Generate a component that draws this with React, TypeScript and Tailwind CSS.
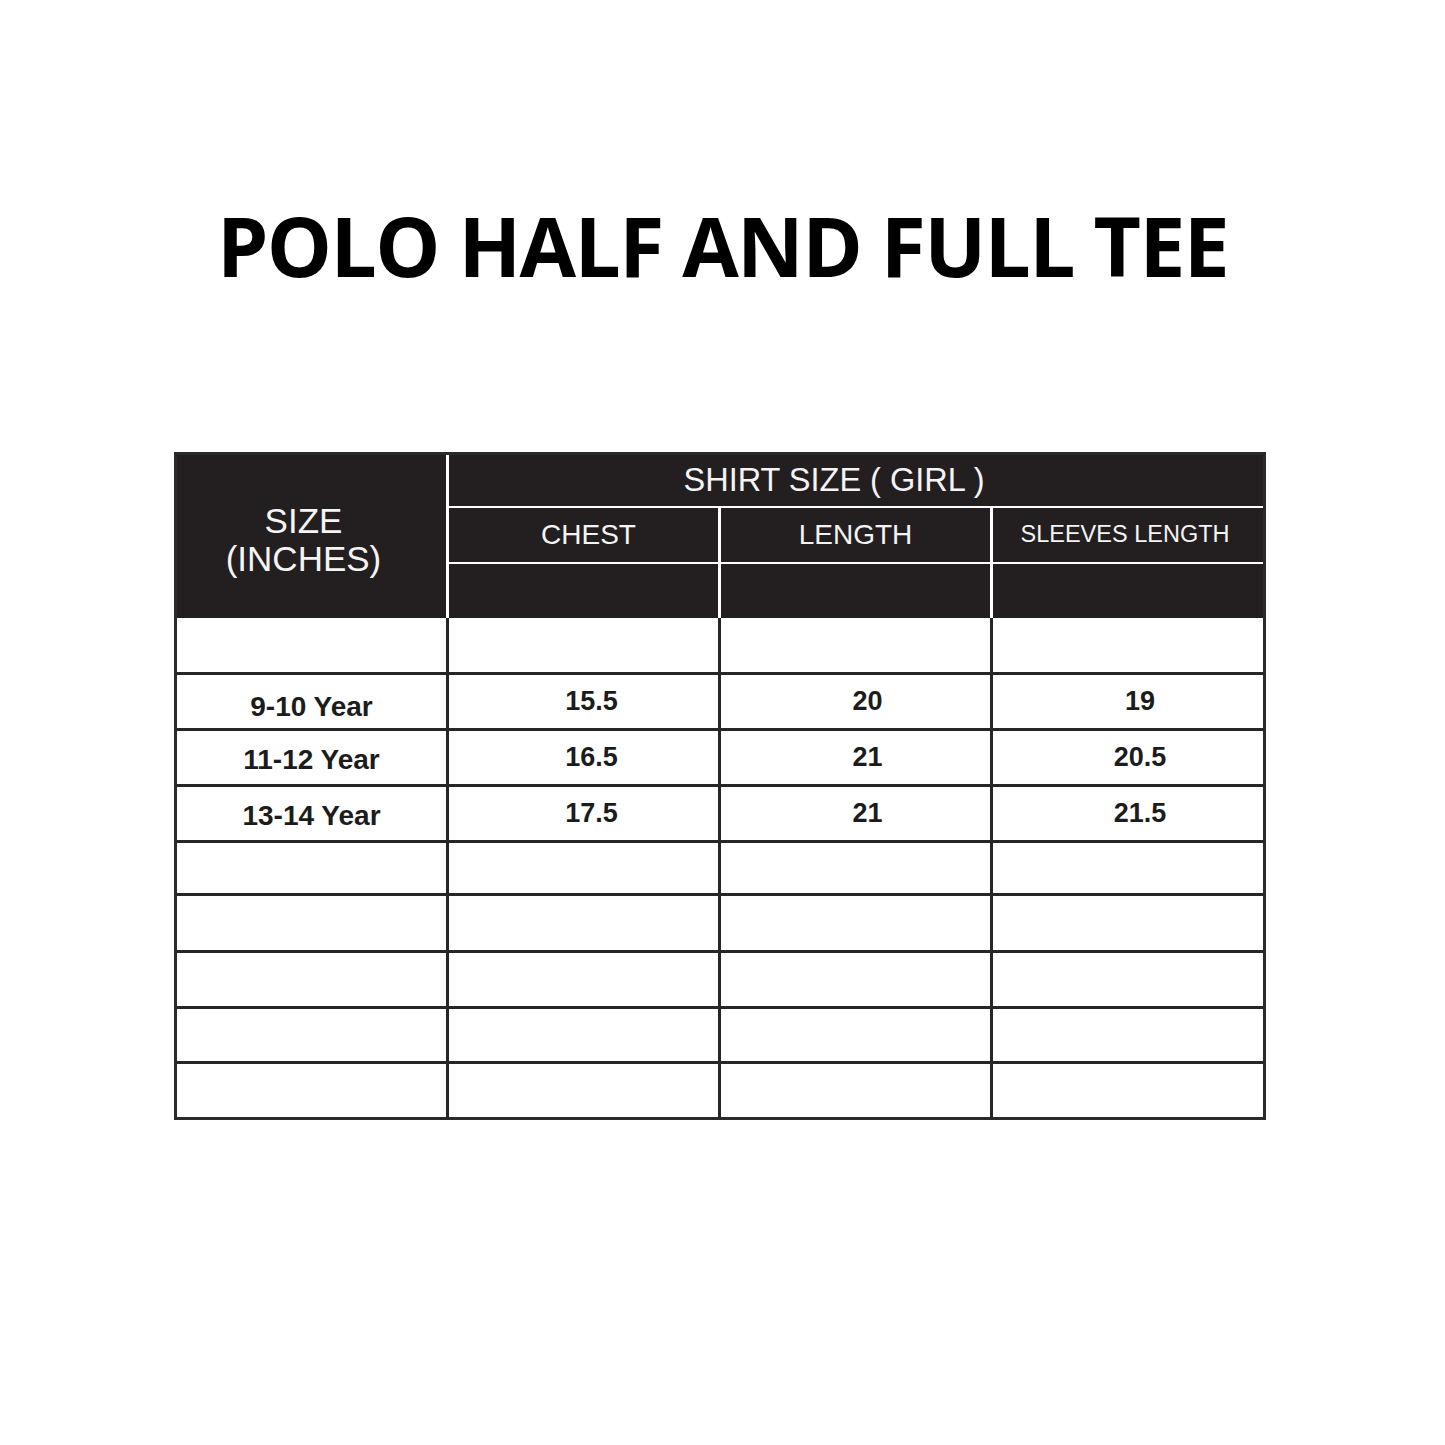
const rows: [string, string, string, string][] = [
  ['', '', '', ''],
  ['9-10 Year', '15.5', '20', '19'],
  ['11-12 Year', '16.5', '21', '20.5'],
  ['13-14 Year', '17.5', '21', '21.5'],
  ['', '', '', ''],
  ['', '', '', ''],
  ['', '', '', ''],
  ['', '', '', ''],
  ['', '', '', ''],
]

const rowHeights = ['h-[57px]', 'h-[56px]', 'h-[56px]', 'h-[56px]', 'h-[53px]', 'h-[57px]', 'h-[56px]', 'h-[55px]', 'h-[53px]']

export default function App() {
  return (
    <div className="min-h-[1445px] w-[1445px] bg-white font-['Liberation_Sans',Arial,sans-serif]">
      <h1 className="flex h-[420px] items-start justify-center pt-[195px] font-['Open_Sans',sans-serif] text-[82px] leading-[100px] font-bold tracking-[-0.02em] text-black">
        POLO HALF AND FULL TEE
      </h1>

      <div className="mx-[174px] mt-[32px] w-[1092px] border-[3px] border-[#2a2a2a]">
        {/* header */}
        <div className="flex h-[163px] bg-[#231f20] text-[#f4f4f4]">
          <div className="flex w-[272px] flex-col items-center justify-center border-r-[3px] border-white pt-[6px] pr-[16px] text-[35px] leading-[38px]">
            <span>SIZE</span>
            <span>(INCHES)</span>
          </div>
          <div className="flex flex-1 flex-col">
            <div className="flex h-[53px] items-center justify-center border-b-2 border-white pr-[44px] text-[32.5px]">
              SHIRT SIZE ( GIRL )
            </div>
            <div className="flex h-[56px] border-b-2 border-white">
              <div className="flex w-[272px] items-center justify-center border-r-[3px] border-white pl-[10px] text-[28px]">CHEST</div>
              <div className="flex w-[272px] items-center justify-center border-r-[3px] border-white text-[28px]">LENGTH</div>
              <div className="flex flex-1 items-center justify-center pr-[6px] text-[23.5px]">SLEEVES LENGTH</div>
            </div>
            <div className="flex flex-1">
              <div className="w-[272px] border-r-[3px] border-white" />
              <div className="w-[272px] border-r-[3px] border-white" />
              <div className="flex-1" />
            </div>
          </div>
        </div>

        {/* body */}
        {rows.map((r, i) => (
          <div
            key={i}
            className={`flex ${rowHeights[i]} ${i < rows.length - 1 ? 'border-b-[3px] border-[#262626]' : ''} text-[27px] font-bold text-[#1c1c1c]`}
          >
            <div className={`flex w-[272px] items-center justify-center border-r-[3px] border-[#262626] text-[28px] ${i === 1 ? 'pt-[10px]' : 'pt-[4px]'}`}>
              {r[0]}
            </div>
            <div className="flex w-[272px] items-center justify-center border-r-[3px] border-[#262626] pl-[16px]">{r[1]}</div>
            <div className="flex w-[272px] items-center justify-center border-r-[3px] border-[#262626] pl-[24px]">{r[2]}</div>
            <div className="flex flex-1 items-center justify-center pl-[24px]">{r[3]}</div>
          </div>
        ))}
      </div>
    </div>
  )
}
